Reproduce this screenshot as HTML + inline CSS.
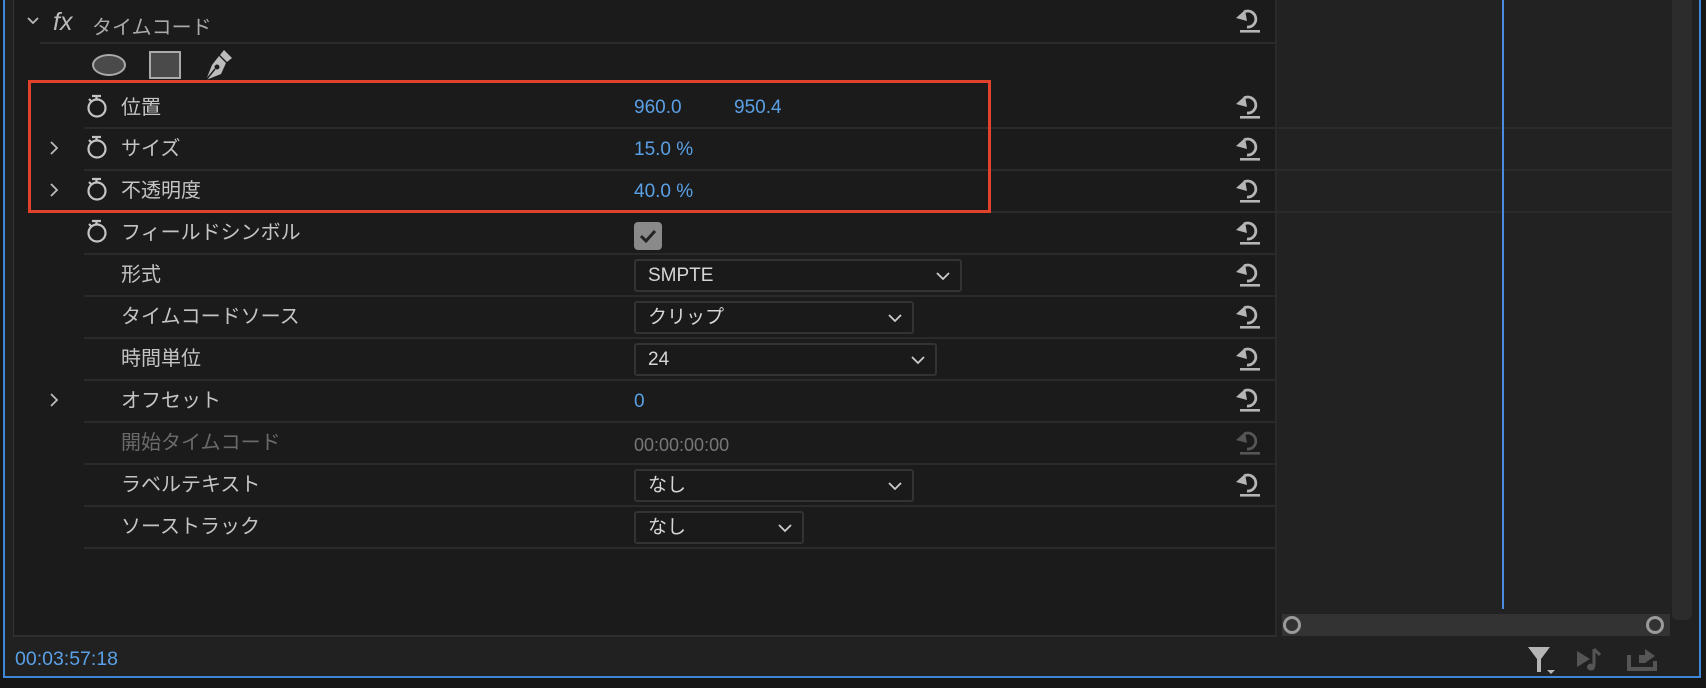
<!DOCTYPE html>
<html><head><meta charset="utf-8"><style>
*{margin:0;padding:0;box-sizing:border-box}
body{width:1706px;height:688px;background:#161616;position:relative;overflow:hidden;font-family:"Liberation Sans","Noto Sans CJK JP",sans-serif;font-size:20px;color:#c4c4c4}
.abs{position:absolute}
.frame{left:3px;top:-2px;width:1698px;height:680px;border:2px solid #3f86d8;background:#212121}
.left{left:13px;top:0;width:1262px;height:637px;background:#1b1b1b;border-left:1px solid #333;border-bottom:2px solid #2e2e2e}
.tl{left:1276px;top:0;width:395px;height:614px;background:#222}
.sep{position:absolute;height:2px;background:#2a2a2a}
.lbl{position:absolute;left:121px;line-height:22px}
.val{position:absolute;left:634px;color:#5aa0e6;line-height:22px;font-size:19px}
.sw{position:absolute;left:85px;width:24px;height:26px}
.chev{position:absolute;left:49px}
.rs{position:absolute;left:1234px;width:28px;height:28px}
.dd{position:absolute;left:634px;height:33px;border:2px solid #333;border-radius:3px;background:#1a1a1a;color:#d6d6d6;padding-left:12px;line-height:29px;font-size:19px}
.dd svg{position:absolute;right:10px;top:10px}
</style></head><body>
<div class="abs frame"></div>
<div class="abs left"></div>
<div class="abs tl"></div>
<div class="abs" style="left:1672px;top:0;width:20px;height:620px;background:#2c2c2c;border-radius:0 0 6px 6px"></div>
<div class="abs" style="left:1275px;top:0;width:2px;height:637px;background:#2a2a2a"></div>
<div class="sep" style="left:1277px;top:127px;width:395px"></div>
<div class="sep" style="left:1277px;top:169px;width:395px"></div>
<div class="sep" style="left:1277px;top:211px;width:395px"></div>
<div class="abs" style="left:1502px;top:0;width:2px;height:609px;background:#4a8de0"></div>
<div class="abs" style="left:1282px;top:614px;width:388px;height:22px;background:#333"></div>
<div class="abs" style="left:1283px;top:616px;width:18px;height:18px;border:3px solid #9a9a9a;border-radius:50%"></div>
<div class="abs" style="left:1646px;top:616px;width:18px;height:18px;border:3px solid #9a9a9a;border-radius:50%"></div>

<!-- header -->
<svg class="abs" style="left:26px;top:16px" width="14" height="10"><path d="M2 2 L7 7 L12 2" stroke="#bbb" stroke-width="1.8" fill="none"/></svg>
<div class="abs" style="left:53px;top:8px;font-style:italic;font-size:25px;color:#bbb">fx</div>
<div class="abs" style="left:92px;top:11px;color:#aaa">タイムコード</div>
<div class="sep" style="left:40px;top:42px;width:1235px"></div>
<div class="abs" style="left:92px;top:54px;width:34px;height:22px;border:2px solid #aaa;border-radius:50%;background:#4a4a4a"></div>
<div class="abs" style="left:149px;top:51px;width:32px;height:28px;border:2px solid #aaa;background:#4a4a4a"></div>
<svg class="abs" style="left:202px;top:48px" width="32" height="34" viewBox="0 0 32 34"><path d="M22 2 L30 10 L25 14 L18 7 Z" fill="#bbb"/><path d="M17 8 L24 15 L19 26 L4 32 L10 17 Z" fill="#bbb"/><circle cx="15" cy="19" r="2.5" fill="#1b1b1b"/><path d="M4 32 L13 21" stroke="#1b1b1b" stroke-width="1.5"/></svg>

<!-- reset icons -->
<svg width="0" height="0" style="position:absolute"><defs><g id="r"><path d="M10 6 A8 8 0 1 1 13 21" stroke="currentColor" stroke-width="2.8" fill="none"/><path d="M2 12 L11 4 L13 15 Z" fill="currentColor"/><rect x="6" y="24" width="20" height="2.6" fill="currentColor"/></g></defs></svg>
<svg class="rs" style="top:6px;color:#b5b5b5"><use href="#r"/></svg>
<svg class="rs" style="top:92px;color:#b5b5b5"><use href="#r"/></svg>
<svg class="rs" style="top:134px;color:#b5b5b5"><use href="#r"/></svg>
<svg class="rs" style="top:176px;color:#b5b5b5"><use href="#r"/></svg>
<svg class="rs" style="top:218px;color:#b5b5b5"><use href="#r"/></svg>
<svg class="rs" style="top:260px;color:#b5b5b5"><use href="#r"/></svg>
<svg class="rs" style="top:302px;color:#b5b5b5"><use href="#r"/></svg>
<svg class="rs" style="top:344px;color:#b5b5b5"><use href="#r"/></svg>
<svg class="rs" style="top:385px;color:#b5b5b5"><use href="#r"/></svg>
<svg class="rs" style="top:428px;color:#555"><use href="#r"/></svg>
<svg class="rs" style="top:470px;color:#b5b5b5"><use href="#r"/></svg>

<svg width="0" height="0" style="position:absolute"><defs><g id="s"><circle cx="12" cy="15" r="8.5" stroke="#c4c4c4" stroke-width="2.2" fill="none"/><path d="M7 3 H16 M11.5 3 V7 M4 6 L6.5 8.5" stroke="#c4c4c4" stroke-width="2.2" fill="none"/></g></defs></svg>
<svg width="0" height="0" style="position:absolute"><defs><g id="c"><path d="M2 2 L8 8 L2 14" stroke="#bbb" stroke-width="1.8" fill="none"/></g></defs></svg>

<!-- separators -->
<div class="sep" style="left:84px;top:127px;width:1191px"></div>
<div class="sep" style="left:84px;top:169px;width:1191px"></div>
<div class="sep" style="left:84px;top:211px;width:1191px"></div>
<div class="sep" style="left:84px;top:253px;width:1191px"></div>
<div class="sep" style="left:84px;top:295px;width:1191px"></div>
<div class="sep" style="left:84px;top:337px;width:1191px"></div>
<div class="sep" style="left:84px;top:379px;width:1191px"></div>
<div class="sep" style="left:84px;top:421px;width:1191px"></div>
<div class="sep" style="left:84px;top:463px;width:1191px"></div>
<div class="sep" style="left:84px;top:505px;width:1191px"></div>
<div class="sep" style="left:84px;top:547px;width:1191px"></div>

<!-- rows -->
<svg class="sw" style="top:93px"><use href="#s"/></svg><div class="lbl" style="top:97px">位置</div>
<div class="val" style="top:97px">960.0</div><div class="val" style="top:97px;left:734px">950.4</div>

<svg class="chev" style="top:140px" width="12" height="16"><use href="#c"/></svg>
<svg class="sw" style="top:134px"><use href="#s"/></svg><div class="lbl" style="top:138px">サイズ</div>
<div class="val" style="top:139px">15.0 %</div>

<svg class="chev" style="top:182px" width="12" height="16"><use href="#c"/></svg>
<svg class="sw" style="top:176px"><use href="#s"/></svg><div class="lbl" style="top:180px">不透明度</div>
<div class="val" style="top:181px">40.0 %</div>

<svg class="sw" style="top:218px"><use href="#s"/></svg><div class="lbl" style="top:222px">フィールドシンボル</div>
<div class="abs" style="left:634px;top:222px;width:28px;height:28px;background:#8a8a8a;border-radius:4px"></div>
<svg class="abs" style="left:638px;top:226px" width="20" height="20"><path d="M3 10 L8 15 L17 5" stroke="#222" stroke-width="3" fill="none"/></svg>

<div class="lbl" style="top:264px">形式</div>
<div class="dd" style="top:259px;width:328px">SMPTE<svg width="14" height="10"><path d="M1 2 L7 8 L13 2" stroke="#ccc" stroke-width="1.8" fill="none"/></svg></div>

<div class="lbl" style="top:306px">タイムコードソース</div>
<div class="dd" style="top:301px;width:280px">クリップ<svg width="14" height="10"><path d="M1 2 L7 8 L13 2" stroke="#ccc" stroke-width="1.8" fill="none"/></svg></div>

<div class="lbl" style="top:348px">時間単位</div>
<div class="dd" style="top:343px;width:303px">24<svg width="14" height="10"><path d="M1 2 L7 8 L13 2" stroke="#ccc" stroke-width="1.8" fill="none"/></svg></div>

<svg class="chev" style="top:392px" width="12" height="16"><use href="#c"/></svg>
<div class="lbl" style="top:390px">オフセット</div>
<div class="val" style="top:391px">0</div>

<div class="lbl" style="top:432px;color:#6a6a6a">開始タイムコード</div>
<div class="val" style="top:434px;color:#777;font-size:18px">00:00:00:00</div>

<div class="lbl" style="top:474px">ラベルテキスト</div>
<div class="dd" style="top:469px;width:280px">なし<svg width="14" height="10"><path d="M1 2 L7 8 L13 2" stroke="#ccc" stroke-width="1.8" fill="none"/></svg></div>

<div class="lbl" style="top:516px">ソーストラック</div>
<div class="dd" style="top:511px;width:170px">なし<svg width="14" height="10"><path d="M1 2 L7 8 L13 2" stroke="#ccc" stroke-width="1.8" fill="none"/></svg></div>

<!-- red box -->
<div class="abs" style="left:28px;top:80px;width:963px;height:133px;border:3px solid #e0432b"></div>

<!-- bottom -->
<div class="abs" style="left:15px;top:648px;color:#5aa0e6;font-size:19.5px">00:03:57:18</div>
<svg class="abs" style="left:1526px;top:645px" width="30" height="30"><path d="M2 2 H24 L15 14 V27 H11 V14 Z" fill="#b5b5b5"/><path d="M21 25 H29 L25 29 Z" fill="#b5b5b5"/></svg>
<svg class="abs" style="left:1576px;top:647px" width="32" height="26"><path d="M1 4 L14 12 L1 20 Z" fill="#555"/><path d="M18 2 V19 M18 2 L24 8" stroke="#555" stroke-width="3" fill="none"/><ellipse cx="15" cy="20" rx="4" ry="3.5" fill="#555"/></svg>
<svg class="abs" style="left:1627px;top:645px" width="30" height="26"><path d="M2 10 V24 H28 V16" stroke="#555" stroke-width="4" fill="none"/><path d="M12 18 V10 H18 V4 L28 11 L18 18 Z" fill="#555"/></svg>
</body></html>
